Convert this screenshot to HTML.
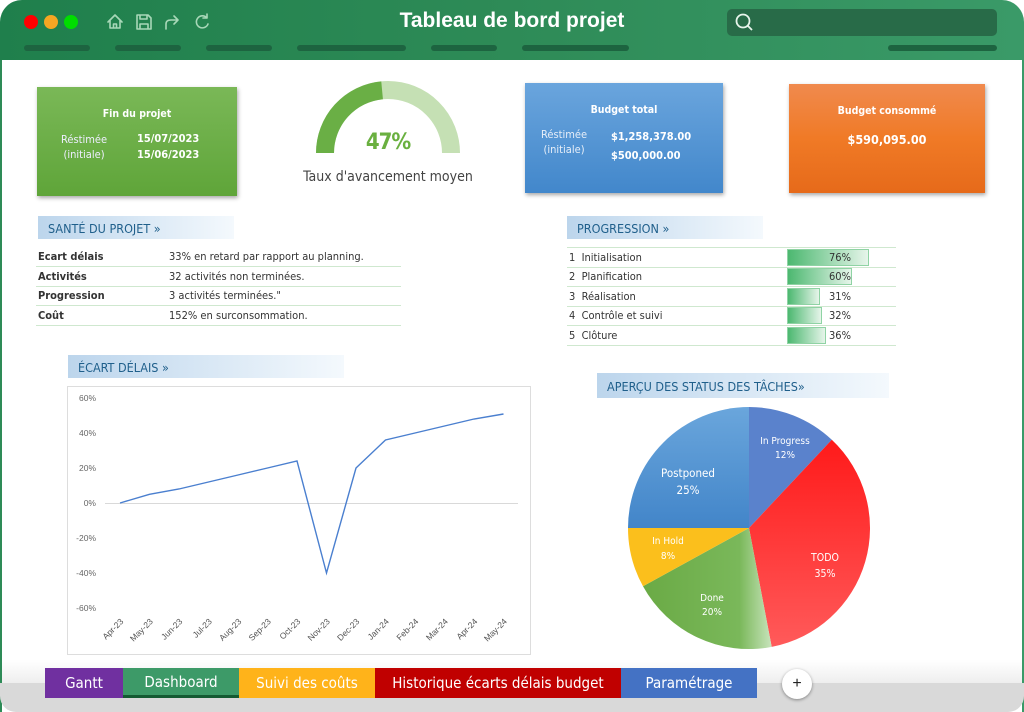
<!DOCTYPE html>
<html><head><meta charset="utf-8"><style>
*{margin:0;padding:0;box-sizing:border-box}
body{width:1024px;height:712px;overflow:hidden;background:#fff;font-family:"Liberation Sans",sans-serif;position:relative}
.abs{position:absolute}
.hdr{left:0;top:0;width:1024px;height:60px;background:linear-gradient(90deg,#1f7f4c,#2e8b57 50%,#3a9a68);border-radius:22px 22px 0 0}
.frame{left:0;top:60px;width:1024px;height:652px;border-left:2px solid #2e8b57;border-right:2px solid #3a9a68}
.bar{height:6px;border-radius:3px;background:#1d6440;top:45px}
.dot{width:14px;height:14px;border-radius:50%;top:15px}
.card{box-shadow:1px 2px 4px rgba(0,0,0,.35);color:#fff;font-family:"DejaVu Sans Condensed","DejaVu Sans",sans-serif}
.ct{font-size:10.5px;font-weight:bold;text-align:center}
.sec{height:23px;background:linear-gradient(90deg,#bcd5ec,#f4f9fd);color:#1f5f8b;font-size:12.5px;padding:5px 0 0 10px;font-family:"DejaVu Sans Condensed","DejaVu Sans",sans-serif}
table{border-collapse:collapse;font-family:"DejaVu Sans Condensed","DejaVu Sans",sans-serif;font-size:11px;color:#333}
td{height:19.5px;border-bottom:1px solid #cfe8cf;padding:0 2px}
.tab{top:668px;height:30px;color:#fff;font-size:15px;text-align:center;line-height:30px;font-family:"DejaVu Sans Condensed","DejaVu Sans",sans-serif}
</style></head><body>
<div class="abs hdr"></div>
<div class="abs frame"></div>
<div class="abs dot" style="left:24px;background:#f00"></div>
<div class="abs dot" style="left:44px;background:#f5a623"></div>
<div class="abs dot" style="left:64px;background:#0d0"></div>
<svg class="abs" style="left:104px;top:10px" width="110" height="24" fill="none" stroke="#a8d8b8" stroke-width="1.6" stroke-linecap="round" stroke-linejoin="round">
<path d="M4 12 L11 5 L18 12 M6 10 V18 H16 V10 M9.5 18 V14 H12.5 V18"/>
<path d="M33 5 H44 L47 8 V19 H33 Z M36 5 V9 H43 V5 M36 19 V14 H44 V19"/>
<path d="M62 19 V14 Q62 10 67 10 H73 M70 6 L74 10 L70 14"/>
<path d="M103 8 A6 6 0 1 0 104 14 M103 4 V8 H99"/>
</svg>
<div class="abs" style="left:0;width:1024px;top:9px;text-align:center;color:#fff;font-size:21px;font-weight:bold;font-family:'Liberation Sans',sans-serif">Tableau de bord projet</div>
<div class="abs" style="left:727px;top:9px;width:270px;height:27px;background:#286b48;border-radius:5px"></div>
<svg class="abs" style="left:734px;top:12px" width="20" height="20" fill="none" stroke="#e8f5ec" stroke-width="1.8"><circle cx="9" cy="9" r="6.5"/><path d="M13.5 13.5 L18 18"/></svg>
<div class="abs bar" style="left:24px;width:66px"></div>
<div class="abs bar" style="left:115px;width:66px"></div>
<div class="abs bar" style="left:206px;width:66px"></div>
<div class="abs bar" style="left:297px;width:109px"></div>
<div class="abs bar" style="left:431px;width:66px"></div>
<div class="abs bar" style="left:522px;width:107px"></div>
<div class="abs bar" style="left:888px;width:109px"></div>

<div class="abs card" style="left:37px;top:87px;width:200px;height:109px;background:linear-gradient(#7ab857,#5fa539)">
<div class="ct" style="margin-top:21px">Fin du projet</div>
<div class="abs" style="left:24px;top:45px;font-size:11px;line-height:15px;text-align:center;color:#eef">Réstimée<br>(initiale)</div>
<div class="abs" style="left:100px;top:44px;font-size:11px;font-weight:bold;line-height:16px">15/07/2023<br>15/06/2023</div>
</div>
<div class="abs card" style="left:525px;top:83px;width:198px;height:110px;background:linear-gradient(#6aa5dd,#4287cb)">
<div class="ct" style="margin-top:21px">Budget total</div>
<div class="abs" style="left:16px;top:44px;font-size:11px;line-height:15px;text-align:center;color:#e6eef8">Réstimée<br>(initiale)</div>
<div class="abs" style="left:86px;top:44px;font-size:11px;font-weight:bold;line-height:19px">$1,258,378.00<br>$500,000.00</div>
</div>
<div class="abs card" style="left:789px;top:84px;width:196px;height:109px;background:linear-gradient(#f08a4e,#f07a26 50%,#e66a1a)">
<div class="ct" style="margin-top:21px">Budget consommé</div>
<div class="ct" style="margin-top:15px;font-size:12.5px">$590,095.00</div>
</div>

<svg class="abs" style="left:300px;top:70px" width="180" height="100">
<path d="M25 83 A63 63 0 0 1 151 83" fill="none" stroke="#c5e0b4" stroke-width="18"/>
<path d="M25 83 A63 63 0 0 1 82.1 20.3" fill="none" stroke="#6aaf45" stroke-width="18"/>
</svg>
<div class="abs" style="left:340px;top:130px;width:96px;text-align:center;color:#6ab040;font-size:22px;font-weight:bold;font-family:'DejaVu Sans Condensed',sans-serif;letter-spacing:-1px">47%</div>
<div class="abs" style="left:300px;top:169px;width:176px;text-align:center;color:#444;font-size:14px;font-family:'DejaVu Sans Condensed',sans-serif">Taux d'avancement moyen</div>

<div class="abs sec" style="left:38px;top:216px;width:196px">SANTÉ DU PROJET »</div>
<table class="abs" style="left:36px;top:247px;width:365px">
<tr><td style="width:131px;font-weight:bold">Ecart délais</td><td>33% en retard par rapport au planning.</td></tr>
<tr><td style="font-weight:bold">Activités</td><td>32 activités non terminées.</td></tr>
<tr><td style="font-weight:bold">Progression</td><td>3 activités terminées."</td></tr>
<tr><td style="font-weight:bold">Coût</td><td>152% en surconsommation.</td></tr>
</table>

<div class="abs sec" style="left:567px;top:216px;width:196px">PROGRESSION »</div>
<table class="abs" style="left:567px;top:247px;width:329px;border-top:1px solid #cfe8cf">
<tr><td style="width:218px">1&nbsp; Initialisation</td><td><div style="position:relative;height:17px"><div style="position:absolute;left:0;top:0;width:82px;height:17px;background:linear-gradient(90deg,#4cb870,#e6f5ea);border:1px solid #8fd3a4"></div><span style="position:absolute;left:42px;top:2px">76%</span></div></td></tr>
<tr><td>2&nbsp; Planification</td><td><div style="position:relative;height:17px"><div style="position:absolute;left:0;top:0;width:65px;height:17px;background:linear-gradient(90deg,#4cb870,#e6f5ea);border:1px solid #8fd3a4"></div><span style="position:absolute;left:42px;top:2px">60%</span></div></td></tr>
<tr><td>3&nbsp; Réalisation</td><td><div style="position:relative;height:17px"><div style="position:absolute;left:0;top:0;width:33px;height:17px;background:linear-gradient(90deg,#4cb870,#e6f5ea);border:1px solid #8fd3a4"></div><span style="position:absolute;left:42px;top:2px">31%</span></div></td></tr>
<tr><td>4&nbsp; Contrôle et suivi</td><td><div style="position:relative;height:17px"><div style="position:absolute;left:0;top:0;width:35px;height:17px;background:linear-gradient(90deg,#4cb870,#e6f5ea);border:1px solid #8fd3a4"></div><span style="position:absolute;left:42px;top:2px">32%</span></div></td></tr>
<tr><td>5&nbsp; Clôture</td><td><div style="position:relative;height:17px"><div style="position:absolute;left:0;top:0;width:39px;height:17px;background:linear-gradient(90deg,#4cb870,#e6f5ea);border:1px solid #8fd3a4"></div><span style="position:absolute;left:42px;top:2px">36%</span></div></td></tr>
</table>

<div class="abs sec" style="left:68px;top:355px;width:276px">ÉCART DÉLAIS »</div>
<svg class="abs" style="left:0;top:0" width="1024" height="712" font-family="Liberation Sans,sans-serif">
<rect x="67.5" y="386.5" width="463" height="268" fill="#fff" stroke="#ddd"/>
<g font-size="8.5" fill="#666" text-anchor="end">
<text x="96" y="401">60%</text><text x="96" y="436">40%</text><text x="96" y="471">20%</text><text x="96" y="506">0%</text><text x="96" y="541">-20%</text><text x="96" y="576">-40%</text><text x="96" y="611">-60%</text>
</g>
<line x1="105" y1="503.5" x2="518" y2="503.5" stroke="#d9d9d9"/>
<polyline fill="none" stroke="#4a7fcf" stroke-width="1.4" points="120,503 149.5,494.3 179,489 208.5,482 238,475 267.5,468 297,461 326.5,573 356,468 385.5,440 415,433 444.5,426 474,419 503.5,414"/>
<g font-size="8.5" fill="#555" text-anchor="end">
<text transform="translate(124,622) rotate(-45)">Apr-23</text>
<text transform="translate(153.5,622) rotate(-45)">May-23</text>
<text transform="translate(183,622) rotate(-45)">Jun-23</text>
<text transform="translate(212.5,622) rotate(-45)">Jul-23</text>
<text transform="translate(242,622) rotate(-45)">Aug-23</text>
<text transform="translate(271.5,622) rotate(-45)">Sep-23</text>
<text transform="translate(301,622) rotate(-45)">Oct-23</text>
<text transform="translate(330.5,622) rotate(-45)">Nov-23</text>
<text transform="translate(360,622) rotate(-45)">Dec-23</text>
<text transform="translate(389.5,622) rotate(-45)">Jan-24</text>
<text transform="translate(419,622) rotate(-45)">Feb-24</text>
<text transform="translate(448.5,622) rotate(-45)">Mar-24</text>
<text transform="translate(478,622) rotate(-45)">Apr-24</text>
<text transform="translate(507.5,622) rotate(-45)">May-24</text>
</g>
<defs>
<linearGradient id="gb" x1="0" y1="0" x2="0" y2="1"><stop offset="0" stop-color="#6aa6dc"/><stop offset="1" stop-color="#4285c9"/></linearGradient>
<linearGradient id="gr" x1="0" y1="0" x2="0" y2="1"><stop offset="0" stop-color="#ff1a1a"/><stop offset="1" stop-color="#ff5a5a"/></linearGradient>
<linearGradient id="gg" x1="0" y1="0" x2="1" y2="0"><stop offset="0" stop-color="#6aaa45"/><stop offset=".75" stop-color="#7ab85a"/><stop offset="1" stop-color="#c8e4bc"/></linearGradient>
</defs>
<path d="M749 528 L749 407 A121 121 0 0 1 831.8 439.8 Z" fill="#5a82cc"/>
<path d="M749 528 L831.8 439.8 A121 121 0 0 1 771.7 646.9 Z" fill="url(#gr)"/>
<path d="M749 528 L771.7 646.9 A121 121 0 0 1 643 586.3 Z" fill="url(#gg)"/>
<path d="M749 528 L643 586.3 A121 121 0 0 1 628 528 Z" fill="#fbbf1c"/>
<path d="M749 528 L628 528 A121 121 0 0 1 749 407 Z" fill="url(#gb)"/>
<g fill="#fff" text-anchor="middle" font-family="DejaVu Sans Condensed,sans-serif">
<text x="785" y="444" font-size="10">In Progress</text><text x="785" y="458" font-size="10">12%</text>
<text x="688" y="477" font-size="11.5">Postponed</text><text x="688" y="494" font-size="11.5">25%</text>
<text x="668" y="544" font-size="10">In Hold</text><text x="668" y="559" font-size="10">8%</text>
<text x="712" y="601" font-size="10">Done</text><text x="712" y="615" font-size="10">20%</text>
<text x="825" y="561" font-size="10.5">TODO</text><text x="825" y="577" font-size="10.5">35%</text>
</g>
</svg>
<div class="abs sec" style="left:597px;top:373px;width:292px;height:25px;padding-top:6px">APERÇU DES STATUS DES TÂCHES»</div>

<div class="abs" style="left:2px;top:660px;width:1020px;height:23px;background:linear-gradient(rgba(230,230,230,0),#eee)"></div>
<div class="abs" style="left:0;top:683px;width:1024px;height:29px;background:#d9d9d9;border-radius:0 0 16px 16px"></div>
<div class="abs tab" style="left:45px;width:78px;background:#7030a0">Gantt</div>
<div class="abs tab" style="left:123px;width:116px;background:#3d9a68;border-bottom:3px solid #145a32;line-height:28px">Dashboard</div>
<div class="abs tab" style="left:239px;width:136px;background:#ffb31a">Suivi des coûts</div>
<div class="abs tab" style="left:375px;width:246px;background:#c00000">Historique écarts délais budget</div>
<div class="abs tab" style="left:621px;width:136px;background:#4472c4">Paramétrage</div>
<div class="abs" style="left:782px;top:669px;width:30px;height:30px;border-radius:50%;background:#fff;box-shadow:0 1px 3px rgba(0,0,0,.4);text-align:center;line-height:29px;font-size:16px;color:#222">+</div>
</body></html>
